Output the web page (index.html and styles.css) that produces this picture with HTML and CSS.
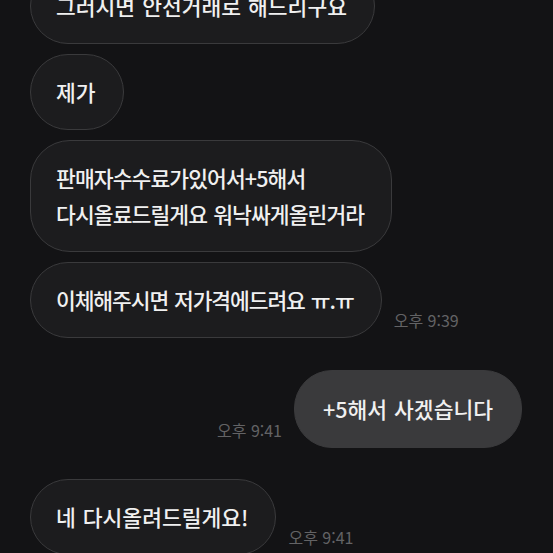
FILE: index.html
```html
<!DOCTYPE html>
<html lang="ko">
<head>
    <meta charset="UTF-8">
    <meta name="viewport" content="width=device-width, initial-scale=1.0">
    <title>채팅</title>
    <link rel="stylesheet" href="styles.css">
</head>
<body>
    <div class="chat">
        <div class="row first">
            <div class="bubble">그러시면 안전거래로 해드리구요</div>
        </div>
        <div class="row">
            <div class="bubble">제가</div>
        </div>
        <div class="row">
            <div class="bubble tight">판매자수수료가있어서+5해서<br>다시올료드릴게요 워낙싸게올린거라</div>
        </div>
        <div class="row">
            <div class="bubble snug">이체해주시면 저가격에드려요 <span class="emo">ㅠ.ㅠ</span></div>
            <span class="time">오후 9:39</span>
        </div>
        <div class="row mine">
            <span class="time">오후 9:41</span>
            <div class="bubble">+5해서 사겠습니다</div>
        </div>
        <div class="row">
            <div class="bubble">네 다시올려드릴게요!</div>
            <span class="time">오후 9:41</span>
        </div>
    </div>
</body>
</html>
```

FILE: styles.css
```css
body {
    margin: 0;
    padding: 0;
    background-color: #131315;
    color: #f0f0f0;
    font-family: "Noto Sans CJK KR", "Noto Sans", sans-serif;
    overflow: hidden;
    height: 553px;
}

.chat {
    display: flex;
    flex-direction: column;
    gap: 10px;
    padding: 0 31px 0 30px;
    margin-top: -32px;
}

.row {
    display: flex;
    align-items: flex-end;
    gap: 12px;
}

.row.mine {
    justify-content: flex-end;
    margin-top: 22px;
    margin-bottom: 21px;
}

.bubble {
    background-color: #1c1c1e;
    border: 1px solid #3a3a3c;
    border-radius: 38px;
    padding: 19px 27px 19px 25px;
    font-size: 21.5px;
    font-weight: 500;
    line-height: 36px;
    word-spacing: 1px;
    white-space: nowrap;
}

.bubble.tight {
    letter-spacing: -0.9px;
    border-radius: 40px;
}

.bubble.snug {
    letter-spacing: -1.1px;
}

.emo {
    letter-spacing: -1px;
}

.mine .bubble {
    background-color: #3a3a3c;
    border-color: #3a3a3c;
    padding: 20px 28px;
}

.time {
    font-size: 16px;
    color: #636365;
    margin-bottom: 6px;
    white-space: nowrap;
}
```
